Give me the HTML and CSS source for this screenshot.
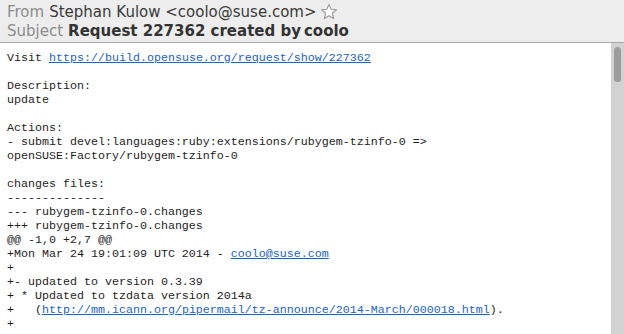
FILE: index.html
```html
<!DOCTYPE html>
<html lang="en">
<head>
  <meta charset="UTF-8">
  <title>Request 227362 created by coolo</title>
  <link rel="stylesheet" href="styles.css">
</head>
<body>
  <div class="header">
    <div class="header-row">
      <span class="label">From</span>
      <span class="value">Stephan Kulow &lt;coolo@suse.com&gt;</span>
      <svg class="star" width="18" height="18" viewBox="0 0 16 16">
        <path d="M8 1.2 L9.9 5.6 L14.6 6 L11 9.1 L12.1 13.8 L8 11.3 L3.9 13.8 L5 9.1 L1.4 6 L6.1 5.6 Z" fill="#fff" stroke="#9a9a9a" stroke-width="1" stroke-linejoin="round"/>
      </svg>
    </div>
    <div class="header-row">
      <span class="label">Subject</span>
      <span class="value subject">Request 227362 created by<span class="tight">coolo</span></span>
    </div>
  </div>
  <div class="content">
<pre class="message">Visit <a href="#">https://build.opensuse.org/request/show/227362</a>

Description:
update

Actions:
- submit devel:languages:ruby:extensions/rubygem-tzinfo-0 =&gt;
openSUSE:Factory/rubygem-tzinfo-0

changes files:
--------------
--- rubygem-tzinfo-0.changes
+++ rubygem-tzinfo-0.changes
@@ -1,0 +2,7 @@
+Mon Mar 24 19:01:09 UTC 2014 - <a href="#">coolo@suse.com</a>
+
+- updated to version 0.3.39
+ * Updated to tzdata version 2014a
+   (<a href="#">http://mm.icann.org/pipermail/tz-announce/2014-March/000018.html</a>).
+
</pre>
    <div class="scrollbar"><div class="thumb"></div></div>
  </div>
</body>
</html>
```

FILE: styles.css
```css
* { box-sizing: border-box; }
html, body {
  margin: 0;
  height: 100%;
  overflow: hidden;
}
body {
  background: #fff;
  display: flex;
  flex-direction: column;
}
.header {
  height: 43px;
  background: #ededed;
  border-bottom: 1px solid #a8a8a8;
  padding: 2px 7px 0;
  font-family: 'DejaVu Sans', sans-serif;
  font-size: 15px;
}
.header-row {
  display: flex;
  align-items: center;
  gap: 5px;
  height: 19px;
  white-space: nowrap;
}
.label {
  color: #8c8c8c;
}
.value {
  color: #3a3a3a;
}
.subject {
  font-weight: bold;
  color: #333;
}
.tight {
  margin-left: 3px;
}
.star {
  margin-left: -2px;
}
.content {
  flex: 1;
  display: flex;
  min-height: 0;
}
.message {
  flex: 1;
  margin: 0;
  padding: 8px 7px 0;
  font-family: 'Liberation Mono', monospace;
  font-size: 11.67px;
  line-height: 14px;
  color: #1e1e1e;
  overflow: hidden;
}
.message a {
  color: #1a63c6;
  text-decoration: underline;
}
.scrollbar {
  width: 13px;
  background: #d2d2d2;
  padding: 4px 3px 0;
}
.thumb {
  width: 7px;
  height: 35px;
  border-radius: 4px;
  background: #9c9c9c;
}
```
